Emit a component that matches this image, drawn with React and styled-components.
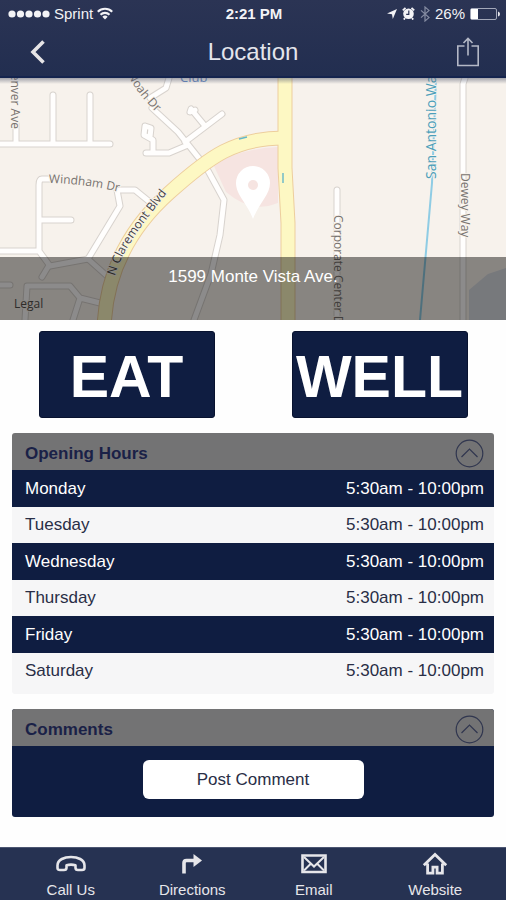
import React, { useState } from "react";
import styled, { createGlobalStyle } from "styled-components";

const GlobalStyle = createGlobalStyle`
  *, *::before, *::after { box-sizing: border-box; }
  body {
    margin: 0;
    background: #fefefe;
    font-family: "Liberation Sans", Arial, Helvetica, sans-serif;
  }
  h1, h2, p { margin: 0; }
  button { font-family: inherit; cursor: pointer; }
`;

const navy = "#0f1d41";

const Page = styled.div`
  min-height: 100vh;
  display: flex;
  flex-direction: column;
  background: #fefefe;
`;

const Header = styled.header`
  background: linear-gradient(#2b3454, #222e50);
  border-bottom: 2px solid #14244e;
  color: #f3f3f6;
`;

const StatusBar = styled.div`
  height: 27px;
  padding: 0 6px 0 8px;
  display: grid;
  grid-template-columns: 1fr auto 1fr;
  align-items: center;
  font-size: 15px;
`;

const StatusGroup = styled.div`
  display: flex;
  align-items: center;
  justify-content: ${(p) => (p.$end ? "flex-end" : "flex-start")};
  gap: ${(p) => (p.$end ? "5px" : "4px")};
`;

const Clock = styled.time`
  font-weight: bold;
`;

const NavBar = styled.div`
  height: 49px;
  padding: 0 18px;
  display: grid;
  grid-template-columns: 40px 1fr 40px;
  align-items: center;
`;

const NavButton = styled.button`
  height: 40px;
  padding: 0;
  border: 0;
  background: none;
  color: ${(p) => p.$tone};
  display: grid;
  place-items: center;
`;

const Title = styled.h1`
  font-size: 24px;
  line-height: 28px;
  font-weight: normal;
  text-align: center;
  color: #e4e5ec;
`;

const MapPanel = styled.section`
  display: grid;
  height: 242px;
  overflow: hidden;
  background: #f7f2ec;
`;

const MapArt = styled.svg`
  grid-area: 1 / 1;
  width: 100%;
  height: 242px;
  display: block;
`;

const Address = styled.p`
  grid-area: 1 / 1;
  align-self: end;
  z-index: 1;
  height: 63px;
  padding-top: 10px;
  background: rgba(0, 0, 0, 0.45);
  color: #fff;
  font-size: 17px;
  line-height: 20px;
  text-align: center;
`;

const Content = styled.main`
  flex: 1;
  display: flex;
  flex-direction: column;
  gap: 15px;
  padding-bottom: 30px;
`;

const Actions = styled.div`
  display: grid;
  grid-template-columns: 1fr 1fr;
  justify-items: center;
  padding-top: 11px;
`;

const ActionButton = styled.button`
  width: 176px;
  height: 87px;
  padding: 4px 0 0;
  border: 1px solid #08122f;
  border-radius: 3px;
  background: ${navy};
  color: #fff;
  font-size: 59px;
  line-height: 80px;
  font-weight: bold;
`;

const Panel = styled.section`
  margin: 0 12px;
  border-radius: 3px;
  overflow: hidden;
  background: ${(p) => (p.$dark ? navy : "#f6f6f7")};
  padding-bottom: ${(p) => (p.$dark ? "0" : "5px")};
`;

const PanelHeading = styled.h2`
  font-size: 17px;
  line-height: 20px;
`;

const PanelToggle = styled.button`
  width: 100%;
  height: 37px;
  padding: 4px 10px 0 13px;
  border: 0;
  background: #737374;
  color: #1a2147;
  font-size: inherit;
  font-weight: bold;
  display: flex;
  align-items: center;
  justify-content: space-between;
`;

const HoursTable = styled.table`
  width: 100%;
  border-collapse: collapse;
  font-size: 17px;
  line-height: 20px;
`;

const HoursRow = styled.tr`
  height: ${(p) => (p.$dark ? "37px" : "36px")};
  background: ${(p) => (p.$dark ? navy : "#f6f6f7")};
  color: ${(p) => (p.$dark ? "#fff" : "#292e46")};
`;

const Day = styled.th`
  padding: 0 0 0 13px;
  font-weight: normal;
  text-align: left;
`;

const Hours = styled.td`
  padding: 0 10px 0 0;
  text-align: right;
`;

const CommentBody = styled.div`
  display: flex;
  justify-content: center;
  padding: 14px 0 18px;
`;

const PostButton = styled.button`
  width: 221px;
  height: 39px;
  padding: 0;
  border: 0;
  border-radius: 6px;
  background: #fff;
  color: #292e46;
  font-size: 17px;
`;

const TabBar = styled.nav`
  height: 53px;
  padding: 0 10px;
  display: grid;
  grid-template-columns: repeat(4, 1fr);
  background: #263252;
  border-top: 1px solid #4c5672;
`;

const Tab = styled.a`
  display: flex;
  flex-direction: column;
  align-items: center;
  padding-top: 4px;
  gap: 4px;
  color: #e6e6ea;
  font-size: 15px;
  line-height: 18px;
  text-decoration: none;
`;

const Signal = () => (
  <svg width="42" height="8" viewBox="0 0 42 8" fill="currentColor" role="img" aria-label="Signal strength">
    {[4, 12.5, 21, 29.5, 38].map((x) => (
      <circle key={x} cx={x} cy="4" r="3.6" />
    ))}
  </svg>
);

const Wifi = () => (
  <svg width="16" height="13" viewBox="0 0 16 13" fill="none" stroke="currentColor" strokeWidth="2.1" aria-hidden="true">
    <path d="M.8 4.8a10.2 10.2 0 0 1 14.4 0M3.5 7.7a6.4 6.4 0 0 1 9 0" />
    <path d="M8 12.6 5.3 9.8a3.9 3.9 0 0 1 5.4 0Z" fill="currentColor" stroke="none" />
  </svg>
);

const LocationArrow = () => (
  <svg width="10" height="10" viewBox="0 0 10 10" fill="currentColor" aria-hidden="true">
    <path d="M10 0 5.8 10 5 5.2 0 4.4Z" />
  </svg>
);

const Alarm = () => (
  <svg width="13" height="13" viewBox="0 0 13 13" aria-hidden="true">
    <path d="M.8 3.4 3.5.8M12.2 3.4 9.5.8M3 11l-1.2 1.6M10 11l1.2 1.6" stroke="currentColor" strokeWidth="1.8" />
    <circle cx="6.5" cy="6.8" r="5.3" fill="currentColor" />
    <path d="M6.8 3.5v3.8H4.2" fill="none" stroke="#2b3454" strokeWidth="1.2" />
  </svg>
);

const Bluetooth = () => (
  <svg width="10" height="16" viewBox="0 0 10 16" fill="none" stroke="#858ca2" strokeWidth="1.2" aria-hidden="true">
    <path d="m1 4.4 8 7.2-4 3.4V1l4 3.4-8 7.2" />
  </svg>
);

const Battery = () => (
  <svg width="30" height="12" viewBox="0 0 30 12" aria-hidden="true">
    <rect x=".5" y=".5" width="26" height="11" rx="1.5" fill="none" stroke="#a3a8b9" />
    <path d="M1 1h7v10H1z" fill="#fff" />
    <path d="M28 3.5q2 .5 2 2.5t-2 2.5z" fill="#e6e7ed" />
  </svg>
);

const BackIcon = () => (
  <svg width="16" height="26" viewBox="0 0 16 26" fill="none" stroke="currentColor" strokeWidth="3.6" aria-hidden="true">
    <path d="M13.5 2.5 3 13l10.5 10.5" />
  </svg>
);

const ShareIcon = () => (
  <svg width="24" height="30" viewBox="0 0 24 30" fill="none" stroke="currentColor" strokeWidth="1.6" aria-hidden="true">
    <path d="M8.5 9H1.8v19.5h20.4V9h-6.7M12 18.5V2M7.5 6 12 1.5 16.5 6" />
  </svg>
);

const CollapseIcon = ({ open }) => (
  <svg width="29" height="29" viewBox="0 0 29 29" fill="none" stroke="#30364f" strokeWidth="1.2" aria-hidden="true">
    <circle cx="14.5" cy="14.5" r="13.3" />
    <path d={open ? "m6.5 18 8-8 8 8" : "m6.5 11 8 8 8-8"} />
  </svg>
);

const PhoneIcon = () => (
  <svg width="30" height="25" viewBox="0 0 30 25" fill="none" stroke="currentColor" strokeWidth="2.6" strokeLinejoin="round" aria-hidden="true">
    <path d="M1.5 16V13.5C1.5 7.5 8.5 5 15 5s13.5 2.500 13.5 8.5V16q0 2-2.5 2h-4q-2.5 0-2.5-2.200v-2.600q-4.500-1.200-9 0v2.600Q10.500 18 8 18H4q-2.5 0-2.5-2Z" />
  </svg>
);

const DirectionsIcon = () => (
  <svg width="24" height="25" viewBox="0 0 24 25" aria-hidden="true">
    <path d="M4 21.5V11q0-2.5 2.5-2.5H15" fill="none" stroke="currentColor" strokeWidth="3.6" />
    <path d="M13.5 2v13l8.5-6.5Z" fill="currentColor" />
  </svg>
);

const EmailIcon = () => (
  <svg width="28" height="25" viewBox="0 0 28 25" fill="none" stroke="currentColor" aria-hidden="true">
    <path d="M2.5 3.5h23V20h-23z" strokeWidth="2.6" />
    <path d="m4 5 10 9.5L24 5M4 18.5l6.500-6.500M24 18.5 17.500 12" strokeWidth="2" />
  </svg>
);

const HomeIcon = () => (
  <svg width="26" height="25" viewBox="0 0 26 25" fill="none" stroke="currentColor" strokeWidth="2.8" aria-hidden="true">
    <path d="M1.8 13.3 13 2.5l11.2 10.8M5.6 11.5v9.700h5.3v-6h4.2v6h5.3v-9.700" />
  </svg>
);

const sideRoads = [
  "M16 46V66M0 66H110M53 17V66M90 17V66",
  "M150 20 166 10 169 0",
  "M152 30 178 54 206 89 224 122 220 157 211 196 194 242",
  "M185 64 222 36M205 48 191 31 190 34 195 32",
  "M188 67 169 75H146M153 74V62L144 57 145 48 151 50 150 59",
  "M50 101H42Q39 101 39 107V173L50 188 88 181 107 198M0 173H39M39 142H71",
  "M117 112 120 128 88 181M120 112H135L151 125",
  "M25 242 27 208H70L80 220 100 225M80 220 73 242M48 189 42 199M0 207H10",
  "M337 112V242M465 0 463 6V242",
];

const mainRoad = "M104 253C105 195 130 150 169 115 210 78 235 60 284 60";
const verticalRoad = "M285-5V90L288 145V247";

const MapView = () => (
  <MapArt viewBox="0 0 506 242" preserveAspectRatio="xMidYMid slice" role="img" aria-label="Map around 1599 Monte Vista Ave.">
    <defs>
      <linearGradient id="edge" x1="0" x2="0" y1="0" y2="1">
        <stop stopColor="#50566a" stopOpacity=".5" />
        <stop offset="1" stopColor="#50566a" stopOpacity="0" />
      </linearGradient>
      <path id="windham" d="M49 105Q87 105 135 118" />
      <path id="claremont" d="M115 198C122 172 142 146 176 104" />
      <path id="noah" d="M128-3Q137 17 166 44" />
    </defs>
    <path d="M0 0h506v242H0z" fill="#f7f2ec" />
    <path d="M213 86Q245 70 278 69V125Q252 136 226 114Z" fill="#f6e4e1" />
    <path d="M469 212 488 196 506 190V242H469Z" fill="#d9dce2" />
    <g fill="none" stroke="#d8d3ce" strokeWidth="7" strokeLinejoin="round" strokeLinecap="round">
      {sideRoads.map((d) => <path key={d} d={d} />)}
    </g>
    <g fill="none" stroke="#fffefd" strokeWidth="5" strokeLinejoin="round" strokeLinecap="round">
      {sideRoads.map((d) => <path key={d} d={d} />)}
    </g>
    <g fill="none" stroke="#edce9d" strokeWidth="15">
      <path d={mainRoad} />
      <path d={verticalRoad} />
    </g>
    <g fill="none" stroke="#fdf8c3" strokeWidth="13">
      <path d={mainRoad} />
      <path d={verticalRoad} />
    </g>
    <path d="m239 61 8-2M283 95v10" stroke="#65b7c9" strokeWidth="1.4" />
    <path d="M436 0 432 105 420 242" fill="none" stroke="#8fcce4" strokeWidth="2" />
    <g fontFamily="'Open Sans', 'Noto Sans', sans-serif" fontSize="12" fill="#77736f" stroke="#f7f2ec" strokeWidth="2" paintOrder="stroke">
      <text><textPath href="#windham">Windham Dr</textPath></text>
      <text fill="#454442"><textPath href="#claremont">N Claremont Blvd</textPath></text>
      <text><textPath href="#noah">Noah Dr</textPath></text>
      <text transform="translate(11 -13) rotate(90)">Denver Ave</text>
      <text transform="translate(334 137) rotate(90)">Corporate Center Dr</text>
      <text transform="translate(461 95) rotate(90)">Dewey Way</text>
      <text x="14" y="230" fill="#55514e">Legal</text>
      <text x="180" y="4" fill="#6688c2" fontSize="13">Club</text>
      <text transform="translate(436 101) rotate(-90)" fill="#4b9fba" fontSize="14">San Antonio Wash</text>
    </g>
    <path d="M253 141C247 125 236 117 236 105a17 17 0 0 1 34 0c0 12-11 20-17 36Z" fill="#fff" />
    <circle cx="253" cy="107" r="5" fill="#f6e4e1" />
    <path d="M0 0h506v6H0z" fill="url(#edge)" />
  </MapArt>
);

const days = ["Monday", "Tuesday", "Wednesday", "Thursday", "Friday", "Saturday"];

const tabs = [
  { label: "Call Us", href: "#call", Icon: PhoneIcon },
  { label: "Directions", href: "#directions", Icon: DirectionsIcon },
  { label: "Email", href: "#email", Icon: EmailIcon },
  { label: "Website", href: "#website", Icon: HomeIcon },
];

function CollapsiblePanel({ title, dark, children }) {
  const [open, setOpen] = useState(true);
  return (
    <Panel $dark={dark}>
      <PanelHeading>
        <PanelToggle type="button" aria-expanded={open} onClick={() => setOpen(!open)}>
          {title}
          <CollapseIcon open={open} />
        </PanelToggle>
      </PanelHeading>
      {open && children}
    </Panel>
  );
}

export default function App() {
  return (
    <Page>
      <GlobalStyle />
      <Header>
        <StatusBar>
          <StatusGroup>
            <Signal />
            <span>Sprint</span>
            <Wifi />
          </StatusGroup>
          <Clock>2:21 PM</Clock>
          <StatusGroup $end>
            <LocationArrow />
            <Alarm />
            <Bluetooth />
            <span>26%</span>
            <Battery />
          </StatusGroup>
        </StatusBar>
        <NavBar>
          <NavButton type="button" aria-label="Back" $tone="#e6e4e6">
            <BackIcon />
          </NavButton>
          <Title>Location</Title>
          <NavButton type="button" aria-label="Share" $tone="#b4b8c6">
            <ShareIcon />
          </NavButton>
        </NavBar>
      </Header>
      <MapPanel>
        <MapView />
        <Address>1599 Monte Vista Ave.</Address>
      </MapPanel>
      <Content>
        <Actions>
          <ActionButton type="button">EAT</ActionButton>
          <ActionButton type="button">WELL</ActionButton>
        </Actions>
        <CollapsiblePanel title="Opening Hours">
          <HoursTable>
            <tbody>
              {days.map((day, i) => (
                <HoursRow key={day} $dark={i % 2 === 0}>
                  <Day scope="row">{day}</Day>
                  <Hours>5:30am - 10:00pm</Hours>
                </HoursRow>
              ))}
            </tbody>
          </HoursTable>
        </CollapsiblePanel>
        <CollapsiblePanel title="Comments" dark>
          <CommentBody>
            <PostButton type="button">Post Comment</PostButton>
          </CommentBody>
        </CollapsiblePanel>
      </Content>
      <TabBar>
        {tabs.map(({ label, href, Icon }) => (
          <Tab key={label} href={href}>
            <Icon />
            {label}
          </Tab>
        ))}
      </TabBar>
    </Page>
  );
}
